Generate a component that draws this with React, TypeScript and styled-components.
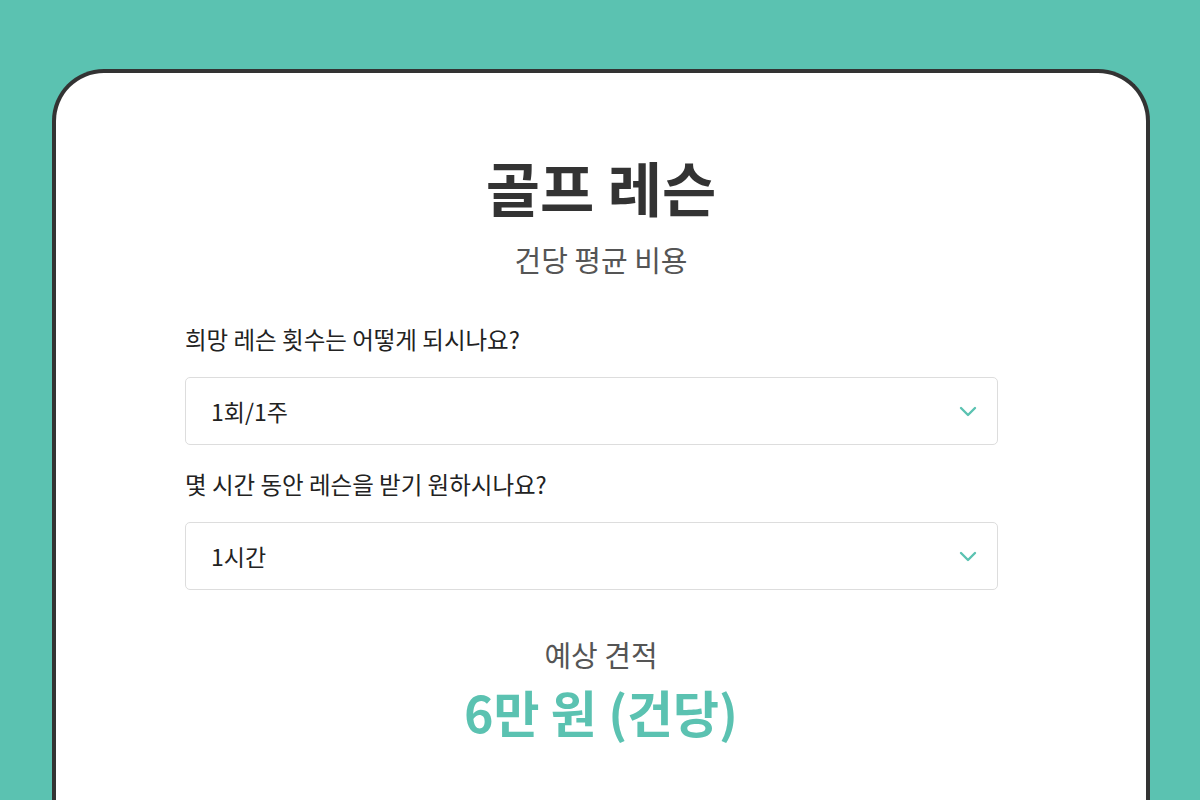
import styled, { createGlobalStyle } from 'styled-components';

const TEAL = 'rgb(91, 194, 177)';

const GlobalStyle = createGlobalStyle`
  html, body {
    margin: 0;
    padding: 0;
    background: ${TEAL};
    font-family: "Noto Sans CJK KR", "Noto Sans", sans-serif;
    overflow: hidden;
  }
`;

const Page = styled.main`
  width: 1200px;
  height: 800px;
  padding: 69px 50px 0 52px;
  box-sizing: border-box;
`;

const Card = styled.section`
  height: 731px;
  background: #fff;
  border: 4px solid #333;
  border-bottom: none;
  border-radius: 52px 52px 0 0;
  box-sizing: border-box;
  padding: 74px 148px 0 129px;
`;

const Header = styled.header`
  text-align: center;
  margin-left: 19px;
  color: #333;

  h1 {
    margin: 0;
    font-size: 59px;
    font-weight: 700;
    line-height: 80px;
  }

  p {
    margin: 10px 0 0;
    font-size: 29px;
    line-height: 44px;
    color: #555;
  }
`;

const Form = styled.div`
  margin-top: 43px;
  display: flex;
  flex-direction: column;
`;

const Label = styled.label`
  font-size: 23.5px;
  line-height: 30px;
  color: #222;
`;

const Select = styled.div`
  margin: 23px 0 24px;
  height: 68px;
  border: 1px solid #ddd;
  border-radius: 5px;
  box-sizing: border-box;
  display: flex;
  align-items: center;
  justify-content: space-between;
  padding: 0 20px 0 25px;
  font-size: 23px;
  color: #222;
`;

const Estimate = styled.div`
  margin-top: 19px;
  margin-left: 19px;
  text-align: center;

  span {
    display: block;
    font-size: 29px;
    line-height: 42px;
    color: #555;
  }

  strong {
    display: block;
    font-size: 50px;
    line-height: 72px;
    font-weight: 700;
    color: ${TEAL};
  }
`;

const Chevron = () => (
  <svg width="18" height="12" viewBox="0 0 18 12" fill="none">
    <path d="M2 3l7 7 7-7" stroke={TEAL} strokeWidth="2.4" strokeLinecap="round" strokeLinejoin="round" />
  </svg>
);

const fields = [
  { label: '희망 레슨 횟수는 어떻게 되시나요?', value: '1회/1주' },
  { label: '몇 시간 동안 레슨을 받기 원하시나요?', value: '1시간' },
];

const App = () => (
  <>
    <GlobalStyle />
    <Page>
      <Card>
        <Header>
          <h1>골프 레슨</h1>
          <p>건당 평균 비용</p>
        </Header>
        <Form>
          {fields.map((f) => (
            <div key={f.label}>
              <Label>{f.label}</Label>
              <Select>
                <span>{f.value}</span>
                <Chevron />
              </Select>
            </div>
          ))}
        </Form>
        <Estimate>
          <span>예상 견적</span>
          <strong>6만 원 (건당)</strong>
        </Estimate>
      </Card>
    </Page>
  </>
);

export default App;
